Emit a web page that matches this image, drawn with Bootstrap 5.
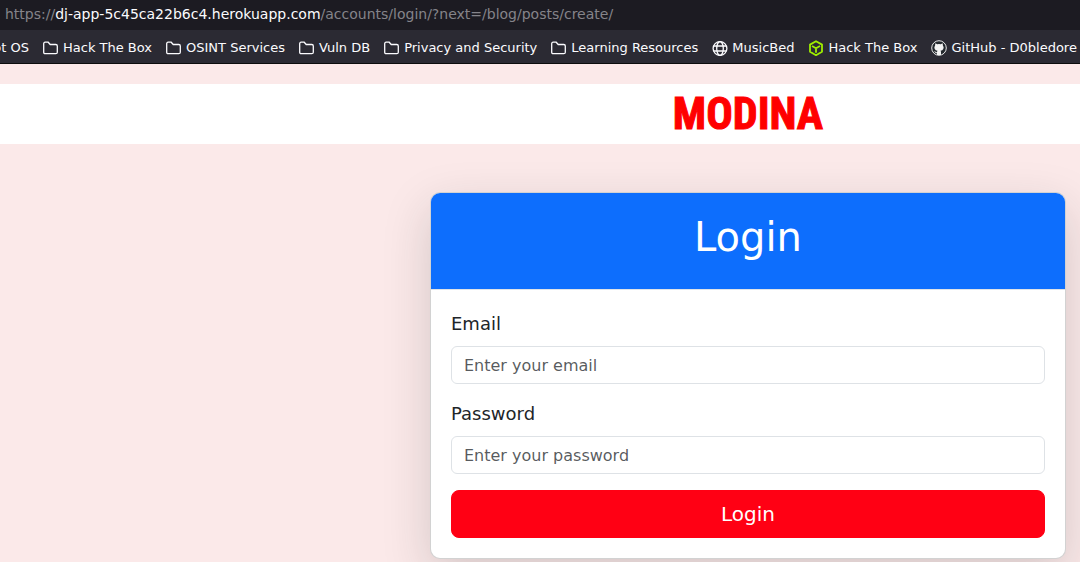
<!DOCTYPE html>
<html lang="en">
<head>
<meta charset="utf-8">
<meta name="viewport" content="width=device-width, initial-scale=1">
<title>Modina - Login</title>
<link href="https://cdn.jsdelivr.net/npm/bootstrap@5.3.0/dist/css/bootstrap.min.css" rel="stylesheet">
<style>
  body { font-family: "DejaVu Sans", sans-serif; background: #fbe9e9; }
  .address { background: #1c1b22; color: #85848a; font-size: 14px; line-height: 20px; height: 30px; padding: 4px 5px; }
  .address strong { color: #fbfbfe; font-weight: 400; }
  .bookmarks { background: #2b2a33; border-bottom: 1px solid #0c0c0d; height: 34px; padding-top: 3px; gap: 14px; font-size: 13px; line-height: 20px; }
  .bookmarks a { color: #fbfbfe; gap: 4px; }
  .bookmarks svg { width: 16px; height: 16px; flex: none; }
  .bookmarks .clipped { width: 29px; }
  .page-area { padding-left: 416px; }
  .brand-bar { margin-top: 20px; height: 60px; }
  .brand { color: #f00; font: 700 44px/60px "Roboto Condensed", "Liberation Sans Narrow", sans-serif; -webkit-text-stroke: 1px #f00; }
  .login-card { margin: 48px 14px 0 14px; border-radius: 10px; overflow: hidden; }
  .login-card .card-header, .login-card .card-body { padding: 20px; }
  .login-card .card-header { border-bottom-color: #dfe3e8; background-clip: padding-box; }
  .login-card h1 { font-size: 40px; line-height: 48px; font-weight: 400; }
  .login-card .form-label { font-size: 18px; line-height: 28px; }
  .login-card .form-control { padding-top: 7px; padding-bottom: 5px; }
  .btn-login { --bs-btn-color: #fff; --bs-btn-bg: #ff0014; --bs-btn-border-color: #ff0014; --bs-btn-hover-color: #fff; --bs-btn-hover-bg: #d90011; }
</style>
</head>
<body class="min-vh-100">
<svg class="d-none">
  <symbol id="folder" viewBox="0 0 16 16"><path d="M.7 12.2V3.8Q.7 2.2 2.2 2.2H5.2L7.2 4.5H12.8Q14.3 4.5 14.3 6V12.2Q14.3 13.7 12.8 13.7H2.2Q.7 13.7.7 12.2Z" fill="none" stroke="#fbfbfe" stroke-width="1.3"/></symbol>
</svg>
<div class="address text-nowrap overflow-hidden">https://<strong>dj-app-5c45ca22b6c4.herokuapp.com</strong>/accounts/login/?next=/blog/posts/create/</div>
<nav class="bookmarks d-flex align-items-center text-nowrap overflow-hidden" aria-label="Bookmarks">
  <a href="#" class="clipped d-flex justify-content-end text-decoration-none flex-shrink-0">ot OS</a>
  <a href="#" class="d-flex align-items-center text-decoration-none"><svg><use href="#folder"/></svg>Hack The Box</a>
  <a href="#" class="d-flex align-items-center text-decoration-none"><svg><use href="#folder"/></svg>OSINT Services</a>
  <a href="#" class="d-flex align-items-center text-decoration-none"><svg><use href="#folder"/></svg>Vuln DB</a>
  <a href="#" class="d-flex align-items-center text-decoration-none"><svg><use href="#folder"/></svg>Privacy and Security</a>
  <a href="#" class="d-flex align-items-center text-decoration-none"><svg><use href="#folder"/></svg>Learning Resources</a>
  <a href="#" class="d-flex align-items-center text-decoration-none"><svg viewBox="0 0 16 16" fill="none" stroke="#fbfbfe" stroke-width="1.3"><circle cx="8" cy="8.5" r="6.9"/><ellipse cx="8" cy="8.5" rx="3.3" ry="6.9"/><path d="M1.6 6H14.4M1.6 11H14.4"/></svg>MusicBed</a>
  <a href="#" class="d-flex align-items-center text-decoration-none"><svg viewBox="0 0 16 16" fill="none" stroke="#9fef00" stroke-width="1.8" stroke-linejoin="round"><path d="M8 1.2 14 4.6V11.8L8 15.2 2 11.8V4.6ZM4 6 8 8.2 12 6M8 8.2V12.7"/></svg>Hack The Box</a>
  <a href="#" class="d-flex align-items-center text-decoration-none"><svg viewBox="0 0 16 16"><circle cx="8" cy="8" r="7.3" fill="#24292e" stroke="#e8e8e8" stroke-width="1"/><path d="M4.3 3.2 6.3 4.3Q8 3.9 9.7 4.3L11.7 3.2 11.9 5.4Q13.2 7 12.3 9 11.5 10.5 9.5 10.7 10.1 11.3 10 12.5V15H6V13.2Q4.3 13.5 3.8 12.1L3 11.3Q4.3 11.1 4.9 12 5.5 12.5 6.1 12 6.1 11.1 6.5 10.7 4.5 10.5 3.7 9 2.8 7 4.1 5.4Z" fill="#f4f4f4"/></svg>GitHub - D0bledore</a>
</nav>
<header class="brand-bar page-area bg-white text-center"><a href="#" class="brand text-decoration-none">MODINA</a></header>
<main class="page-area">
  <div class="card login-card shadow-lg">
    <div class="card-header bg-primary text-white text-center"><h1>Login</h1></div>
    <form class="card-body">
      <div class="mb-3">
        <label for="email" class="form-label d-block">Email</label>
        <input type="email" id="email" class="form-control" placeholder="Enter your email">
      </div>
      <div class="mb-3">
        <label for="password" class="form-label d-block">Password</label>
        <input type="password" id="password" class="form-control" placeholder="Enter your password">
      </div>
      <button type="submit" class="btn btn-login btn-lg w-100">Login</button>
    </form>
  </div>
</main>
<script src="https://cdn.jsdelivr.net/npm/bootstrap@5.3.0/dist/js/bootstrap.bundle.min.js"></script>
</body>
</html>
